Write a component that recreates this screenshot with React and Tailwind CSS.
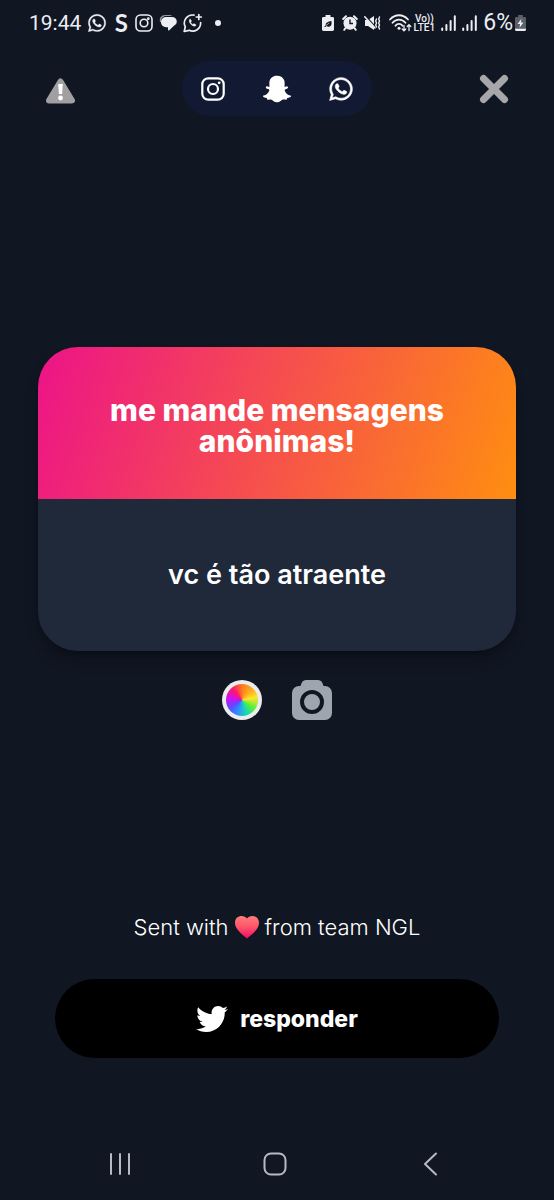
import { FaSnapchatGhost, FaTwitter, FaWhatsapp } from "react-icons/fa";

function ChatBubbles() {
  return (
    <svg viewBox="0 0 18 18" className="h-[18px] w-[18px]" fill="currentColor" aria-hidden="true">
      <path d="M1 8C0 4 2.500 1 6 1h4.500c1 0 2 .4 2.800 1H7C4 2 2 4.300 2 8z" opacity=".6" />
      <path d="M7 3h6a4.600 4.600 0 0 1 2 8.800L10.500 16c-.8.9-1.500.6-1.500-.4v-2.400H7A4.900 4.900 0 0 1 7 3z" />
    </svg>
  );
}

function WhatsappPlus() {
  return (
    <svg viewBox="0 0 20 20" className="h-5 w-5" fill="none" stroke="currentColor" strokeWidth="1.7" strokeLinecap="round" strokeLinejoin="round" aria-hidden="true">
      <path d="M11 2.200a8 8 0 0 0-8.700 11.600L1.200 18.500l4.900-1.200A8 8 0 0 0 17.600 9.500" />
      <path d="M15.800 1.500v5M13.300 4h5" />
      <path d="M7 6.200c-1.400 1-.9 3.200.8 5s4 2.700 5.200 1.200c.6-.8-1.800-2-2.400-1.700l-.7.7c-1-.4-1.800-1.200-2.200-2.200l.7-.7c.3-.7-.6-2.500-1.400-2.300z" fill="currentColor" strokeWidth=".4" />
    </svg>
  );
}

function BatterySaver() {
  return (
    <svg viewBox="0 0 12 17" className="h-4 w-3" preserveAspectRatio="none" aria-hidden="true">
      <path d="M3.500 0h5v2h2A1.500 1.500 0 0 1 12 3.500v12a1.500 1.500 0 0 1-1.500 1.500h-9A1.500 1.500 0 0 1 0 15.500v-12A1.500 1.500 0 0 1 1.500 2h2z" fill="currentColor" />
      <path d="M9.500 6.300v3.200a3 3 0 0 1-5 2.200L3 13l-.7-.8 1.500-1.400C3.200 8 6 7 9.500 6.300z" fill="#101622" />
      <path d="M3.800 11.200l3.400-2.600" stroke="currentColor" strokeWidth=".7" />
    </svg>
  );
}

function Alarm() {
  return (
    <svg viewBox="0 0 16 16" className="h-4 w-4" aria-hidden="true">
      <path d="M1.200 4L4 1.200M14.800 4L12 1.200M3.500 13l-1.200 1.800M12.500 13l1.200 1.800" stroke="currentColor" strokeWidth="2" strokeLinecap="round" />
      <circle cx="8" cy="8.200" r="6.500" fill="currentColor" />
      <path d="M8 4.500v4h3" fill="none" stroke="#101622" strokeWidth="1.400" />
    </svg>
  );
}

function MutedVibrate() {
  return (
    <svg viewBox="0 0 17 16" className="h-4 w-[17px]" fill="none" stroke="currentColor" strokeWidth="1.400" strokeLinecap="round" aria-hidden="true">
      <path d="M1 5h3l6-4v14l-6-4H1z" fill="currentColor" stroke="none" />
      <path d="M2 1.500L11.500 12" stroke="#101622" strokeWidth="1.400" />
      <path d="M.8 1.800L11 13" strokeWidth="1.600" />
      <path d="M12.500 4l-.8 2 .8 2-.8 2 .8 2M15.500 2l-.8 2 .8 2-.8 2 .8 2-.8 2 .8 2" />
    </svg>
  );
}

function Wifi() {
  return (
    <svg viewBox="0 0 23 18" className="h-[18px] w-[23px]" fill="none" stroke="currentColor" strokeWidth="1.800" strokeLinecap="round" aria-hidden="true">
      <path d="M1 5.500C6-.2 14-.2 19 5.500M3.500 8.800c3.500-4.300 9.500-4.300 13 0M6.500 11.700c2-2.400 5-2.400 7 0" />
      <circle cx="10" cy="14.200" r="1.500" fill="currentColor" stroke="none" />
      <path d="M15 11.500v5M13.200 15l1.800 1.800 1.800-1.800M20 16.500V11M18.200 12.500L20 10.700l1.800 1.800" strokeWidth="1.300" />
    </svg>
  );
}

function Signal() {
  return (
    <svg viewBox="0 0 15 16" className="h-4 w-[15px]" fill="none" stroke="currentColor" strokeWidth="2" strokeLinecap="round" aria-hidden="true">
      <path d="M1.200 13.500V15M5.400 10v5M9.600 6v9M13.800 1.200V15" />
    </svg>
  );
}

function Charging() {
  return (
    <svg viewBox="0 0 12 17" className="h-4 w-[11px]" preserveAspectRatio="none" aria-hidden="true">
      <path d="M3.500 0h5v2h2A1.500 1.500 0 0 1 12 3.500v12a1.500 1.500 0 0 1-1.500 1.500h-9A1.500 1.500 0 0 1 0 15.500v-12A1.500 1.500 0 0 1 1.500 2h2z" fill="#5c606a" />
      <path d="M0 14.500h12v1a1.500 1.500 0 0 1-1.500 1.500h-9A1.500 1.500 0 0 1 0 15.500zM7 4L2.800 9.500h2.700L5 13.500 9.200 8H6.500z" fill="currentColor" />
    </svg>
  );
}

function StatusBar() {
  return (
    <div className="flex h-[46px] items-center justify-between pr-7 pl-[29px] text-[#eceef3]">
      <div className="flex items-center gap-[6px]">
        <time className="pt-px font-[Roboto,sans-serif] text-[21px]">19:44</time>
        <FaWhatsapp className="h-5 w-5" stroke="currentColor" strokeWidth="8" />
        <b className="w-4 text-center font-[Lato,sans-serif] text-2xl leading-5 font-bold">S</b>
        <svg viewBox="0 0 18 18" className="h-[18px] w-[18px]" fill="none" stroke="currentColor" strokeWidth="1.600" aria-hidden="true">
          <rect x="1" y="1" width="16" height="16" rx="4.500" />
          <circle cx="9" cy="9" r="3.800" />
          <circle cx="13.300" cy="4.700" r=".6" fill="currentColor" />
        </svg>
        <ChatBubbles />
        <WhatsappPlus />
        <span className="ml-[6px] h-[6px] w-[6px] rounded-full bg-[#eceef3]" />
      </div>
      <div className="flex items-center gap-[6px]">
        <span className="mr-[2px]">
          <BatterySaver />
        </span>
        <Alarm />
        <span className="mr-[2px]">
          <MutedVibrate />
        </span>
        <Wifi />
        <span className="-ml-1 text-center font-[Roboto,sans-serif] text-[10px] leading-[9px] font-medium">
          Vo))
          <br />
          LTE1
        </span>
        <Signal />
        <Signal />
        <span className="flex items-center font-[Roboto,sans-serif] text-[23px] leading-6">
          6%
          <span className="ml-[2px]">
            <Charging />
          </span>
        </span>
      </div>
    </div>
  );
}

function Header() {
  return (
    <header className="flex items-center justify-between px-[45px] pt-[15px]">
      <button type="button" aria-label="Denunciar" className="w-[31px]">
        <svg viewBox="0 0 31 28" className="mt-1 h-7 w-[31px]" aria-hidden="true">
          <path d="M15.500 4.500L27 23.500H4z" fill="#a0a0a3" stroke="#a0a0a3" strokeWidth="6" strokeLinejoin="round" />
          <path d="M13.200 7h4.600l-.7 10h-3.200z" fill="#fff" />
          <circle cx="15.500" cy="21" r="2.400" fill="#fff" />
        </svg>
      </button>
      <nav className="flex h-[55px] w-[190px] items-center justify-between rounded-full bg-[#121a33] px-[18px] text-white">
        <a href="#instagram" aria-label="Instagram">
          <svg viewBox="0 0 26 26" className="h-[26px] w-[26px]" fill="none" stroke="currentColor" strokeWidth="2.200" aria-hidden="true">
            <rect x="2.300" y="2.300" width="21.400" height="21.400" rx="6" />
            <circle cx="13" cy="13" r="5" />
            <circle cx="19.200" cy="6.800" r="1.400" fill="currentColor" stroke="none" />
          </svg>
        </a>
        <a href="#snapchat" aria-label="Snapchat">
          <FaSnapchatGhost className="h-7 w-7" />
        </a>
        <a href="#whatsapp" aria-label="WhatsApp">
          <FaWhatsapp className="h-[26px] w-[26px]" stroke="currentColor" strokeWidth="12" />
        </a>
      </nav>
      <button type="button" aria-label="Fechar" className="flex w-[31px] justify-end">
        <svg viewBox="0 0 30 30" className="h-[30px] w-[30px]" fill="none" stroke="#a7a7aa" strokeWidth="7" strokeLinecap="round" aria-hidden="true">
          <path d="M4.500 4.500l21 21M25.500 4.500l-21 21" />
        </svg>
      </button>
    </header>
  );
}

function Camera() {
  return (
    <svg viewBox="0 0 40 40" className="h-10 w-10" aria-hidden="true">
      <path d="M14 0h12c3 0 4.500 2 5.500 6h1.500a7 7 0 0 1 7 7v20a7 7 0 0 1-7 7H7a7 7 0 0 1-7-7V13a7 7 0 0 1 7-7h1.500C9.500 2 11 0 14 0z" fill="#9fa5af" />
      <circle cx="20" cy="22" r="10" fill="none" stroke="#101622" strokeWidth="4" />
    </svg>
  );
}

function Heart() {
  return (
    <svg viewBox="0 0 24 24" className="mx-[6px] h-6 w-6" role="img" aria-label="amor">
      <defs>
        <linearGradient id="heart" x1="0" y1="0" x2="0" y2="1">
          <stop offset="0" stopColor="#ff7d7c" />
          <stop offset=".5" stopColor="#ff5268" />
          <stop offset="1" stopColor="#f10b67" />
        </linearGradient>
      </defs>
      <path d="M12 3.500C9.500-.2 0-.3 0 8c0 6 6.500 11 12 15.500C17.500 19 24 14 24 8c0-8.300-9.500-8.200-12-4.500z" fill="url(#heart)" />
    </svg>
  );
}

function SystemNav() {
  return (
    <nav className="flex h-[72px] items-center justify-between pr-[109px] pl-[105px] text-[#b7bac2]">
      <button type="button" aria-label="Recentes">
        <svg viewBox="0 0 30 24" className="h-6 w-[30px]" stroke="currentColor" strokeWidth="2" strokeLinecap="round" aria-hidden="true">
          <path d="M6 2v20M15 2v20M24 2v20" />
        </svg>
      </button>
      <button type="button" aria-label="Início">
        <svg viewBox="0 0 24 24" className="h-6 w-6" fill="none" stroke="currentColor" strokeWidth="2" aria-hidden="true">
          <rect x="1.500" y="1.500" width="21" height="21" rx="6.500" />
        </svg>
      </button>
      <button type="button" aria-label="Voltar">
        <svg viewBox="0 0 30 24" className="h-6 w-[30px]" fill="none" stroke="currentColor" strokeWidth="2" strokeLinecap="round" strokeLinejoin="round" aria-hidden="true">
          <path d="M21 1.500L10 12l11 10.500" />
        </svg>
      </button>
    </nav>
  );
}

export default function App() {
  return (
    <div className="flex min-h-screen flex-col bg-[#101622] font-[Inter,sans-serif] text-white">
      <StatusBar />
      <Header />
      <main className="flex flex-1 flex-col">
        <section className="flex flex-1 flex-col justify-center px-[38px] pt-10">
          <div className="overflow-hidden rounded-[40px] shadow-lg shadow-black/30">
            <h1 className="flex min-h-[152px] items-center justify-center bg-linear-[108deg] from-[#ed1388] to-[#ff8e10] px-10 pt-[6px] text-center text-[30px] leading-[31px] font-extrabold">
              me mande mensagens anônimas!
            </h1>
            <p className="flex min-h-[152px] items-center justify-center bg-[#1f293a] px-10 text-center text-[27px] leading-8 font-semibold">
              vc é tão atraente
            </p>
          </div>
          <div className="mt-[29px] flex justify-center gap-[30px]">
            <button type="button" aria-label="Cor" className="h-10 w-10 rounded-full bg-[#ececec] p-1">
              <span className="block h-full w-full rounded-full bg-conic-[from_0deg,#ff7a1c,#ffb020_45deg,#ffe52e_80deg,#58f03c_125deg,#18d9b0_160deg,#2f8dff_200deg,#5b4dff_235deg,#c812f5_275deg,#ff1673_320deg,#ff7a1c]" />
            </button>
            <button type="button" aria-label="Câmera">
              <Camera />
            </button>
          </div>
        </section>
        <p className="flex h-8 items-center justify-center text-[22px] leading-8 font-light">
          Sent with <Heart /> from team NGL
        </p>
        <div className="px-[55px] pt-9 pb-[70px]">
          <button type="button" className="flex h-[79px] w-full items-center justify-center gap-3 rounded-full bg-black text-[23px] leading-8 font-extrabold">
            <FaTwitter className="h-8 w-8" />
            responder
          </button>
        </div>
      </main>
      <SystemNav />
    </div>
  );
}
